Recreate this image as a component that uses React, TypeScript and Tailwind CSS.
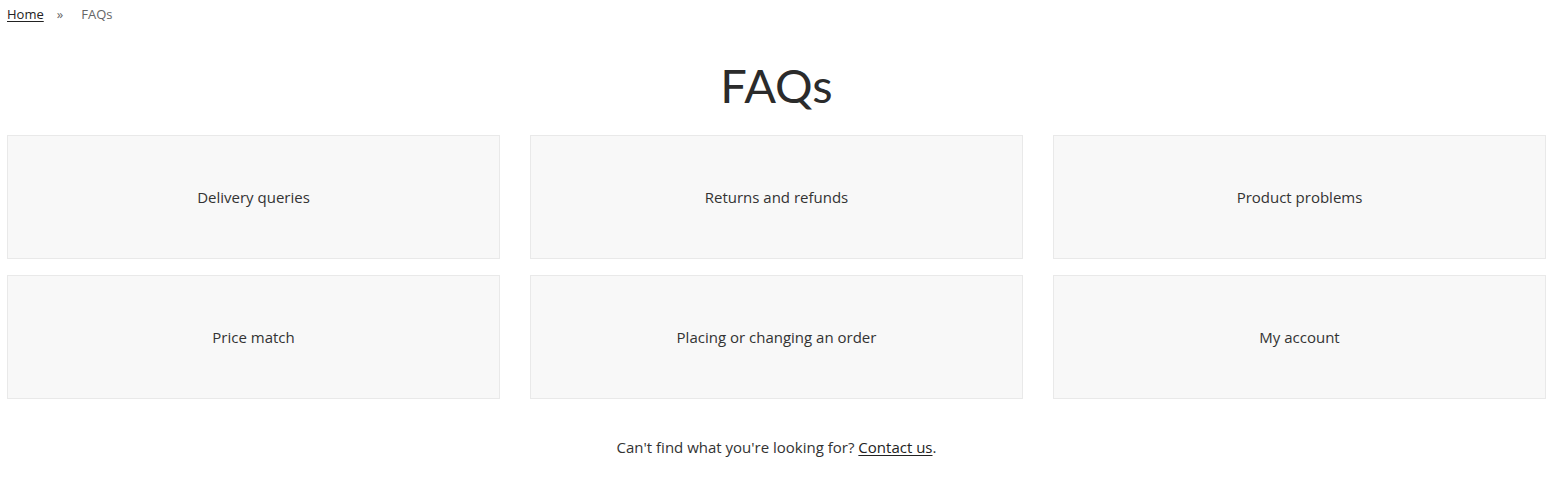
import React from 'react';

const topics: string[] = [
  'Delivery queries',
  'Returns and refunds',
  'Product problems',
  'Price match',
  'Placing or changing an order',
  'My account',
];

const App: React.FC = () => {
  return (
    <div className="w-[1564px] min-h-[499px] bg-white text-[#333] font-['Open_Sans',sans-serif]">
      <div className="pl-[7px] pr-[18px]">
        {/* breadcrumb */}
        <div className="flex items-center h-[29px] text-[13px] leading-none">
          <a href="#" className="underline text-[#222] underline-offset-2">Home</a>
          <span className="ml-[13px] text-[#666]">»</span>
          <span className="ml-[18px] text-[#666]">FAQs</span>
        </div>

        <h1 className="mt-[28px] text-center text-[47px] leading-[56px] font-['Lato',sans-serif] text-[#2b2b2b]">
          FAQs
        </h1>

        <div className="mt-[22px] grid grid-cols-3 gap-x-[30px] gap-y-[16px]">
          {topics.map((t) => (
            <a
              key={t}
              href="#"
              className="h-[124px] flex items-center justify-center bg-[#f8f8f8] border border-[#e9e9e9] text-[15px] text-[#333]"
            >
              {t}
            </a>
          ))}
        </div>

        <p className="mt-[37px] text-center text-[15px] text-[#333]">
          Can't find what you're looking for?{' '}
          <a href="#" className="underline underline-offset-2 text-[#222]">Contact us</a>.
        </p>
      </div>
    </div>
  );
};

export default App;
